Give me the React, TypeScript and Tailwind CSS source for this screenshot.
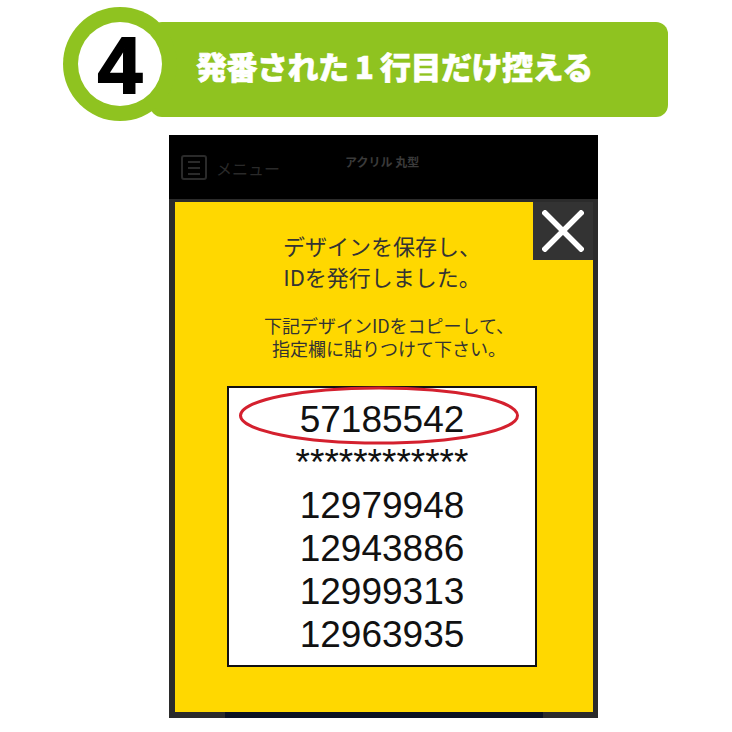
export default function App() {
  const jp = { fontFamily: '"Noto Sans CJK JP", "Noto Sans", sans-serif' };
  const ids = ["57185542", "************", "12979948", "12943886", "12999313", "12963935"];
  return (
    <div className="w-[732px] h-[732px] bg-white overflow-hidden" style={jp}>
      {/* header */}
      <div className="relative h-[135px] pt-[22px] pl-[150px]">
        <div className="w-[518px] h-[95px] rounded-[12px] bg-[#8fc320] flex items-center pl-[46px] pb-[8px]">
          <span className="text-white text-[31px] font-black leading-none tracking-[-0.5px] whitespace-nowrap [-webkit-text-stroke:0.6px_white]">
            発番された 1 行目だけ控える
          </span>
        </div>
        <div className="absolute left-[63px] top-[7px] w-[114px] h-[114px] rounded-full bg-[#8fc320] flex items-center justify-center">
          <div className="w-[84px] h-[84px] rounded-full bg-white flex items-center justify-center">
            <span
              className="text-[80px] font-bold leading-none text-black mt-[4px] [-webkit-text-stroke:2px_black]"
              style={{ fontFamily: '"Liberation Sans", Arial, sans-serif' }}
            >
              4
            </span>
          </div>
        </div>
      </div>

      {/* phone screen */}
      <div className="ml-[169px] w-[429px] bg-black">
        {/* top bar */}
        <div className="h-[64px] flex items-start pt-[20px] pl-[12px]">
          <div className="w-[26px] h-[25px] rounded-[3px] border-2 border-[#2a2a2a] flex flex-col items-center justify-center gap-[4px]">
            <div className="w-[12px] h-[2px] bg-[#2a2a2a]" />
            <div className="w-[12px] h-[2px] bg-[#2a2a2a]" />
            <div className="w-[12px] h-[2px] bg-[#2a2a2a]" />
          </div>
          <span className="ml-[9px] mt-[1px] text-[16px] leading-[24px] text-[#2a2a2a]">メニュー</span>
          <span className="ml-[65px] mt-[-5px] text-[12px] leading-[24px] font-bold text-[#3a3a3a]">アクリル 丸型</span>
        </div>

        {/* modal */}
        <div className="bg-[#2b2b2b] pt-[3px] pl-[6px] pr-[5px]">
          <div className="relative h-[510px] bg-[#ffd800] pt-[28px]">
            <div className="absolute right-0 top-0 w-[60px] h-[58px] bg-[#333333] flex items-center justify-center">
              <svg width="42" height="42" viewBox="0 0 42 42">
                <path d="M3 3 L39 39 M39 3 L3 39" stroke="#ffffff" strokeWidth="5.5" strokeLinecap="square" />
              </svg>
            </div>
            <div className="text-center text-[22px] leading-[31px] text-[#333333] pr-[4px]">
              <div>デザインを保存し、</div>
              <div>IDを発行しました。</div>
            </div>
            <div className="mt-[22px] text-center text-[18px] leading-[23px] text-[#333333] pl-[10px]">
              <div>下記デザインIDをコピーして、</div>
              <div>指定欄に貼りつけて下さい。</div>
            </div>
            <div
              className="relative mt-[26px] ml-[52px] w-[310px] border-2 border-[#111111] bg-white pt-[10px] pb-[9px] text-center text-[37px] leading-[43px] text-[#111111]"
              style={{ fontFamily: '"Liberation Sans", Arial, sans-serif' }}
            >
              {ids.map((t, i) => (
                <div key={i}>{t}</div>
              ))}
              <svg
                className="absolute left-[-2px] top-[-2px] overflow-visible pointer-events-none"
                width="310"
                height="70"
                viewBox="0 0 310 70"
              >
                <ellipse cx="152" cy="29.5" rx="138.5" ry="27.5" fill="none" stroke="#d4202e" strokeWidth="3" />
              </svg>
            </div>
          </div>
          <div className="h-[6px] pl-[50px]">
            <div className="w-[318px] h-[6px] bg-[#0b1222]" />
          </div>
        </div>
      </div>
    </div>
  );
}
